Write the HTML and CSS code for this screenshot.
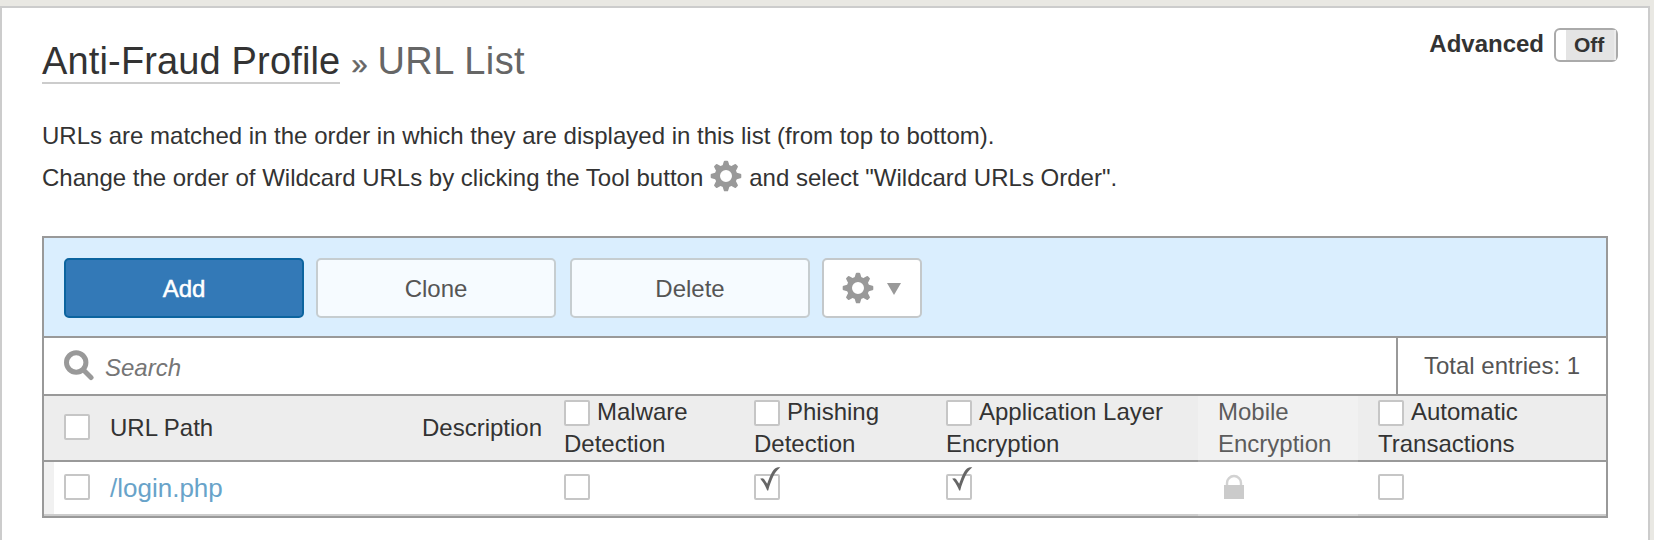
FILE: index.html
```html
<!DOCTYPE html>
<html lang="en">
<head>
<meta charset="utf-8">
<title>Anti-Fraud Profile » URL List</title>
<link rel="stylesheet" href="styles.css">
</head>
<body>
<svg width="0" height="0" class="defs">
  <symbol id="gear" viewBox="-16 -16 32 32">
    <g fill="currentColor">
      <g id="teeth">
        <path id="tooth" d="M-2.2-14.400Q-2-15.300-1.200-15.300H1.200Q2-15.300 2.200-14.400L3.600-10h-7.200z"/>
        <use href="#tooth" transform="rotate(90)"/>
        <use href="#tooth" transform="rotate(180)"/>
        <use href="#tooth" transform="rotate(270)"/>
      </g>
      <use href="#teeth" transform="rotate(45)"/>
      <path fill-rule="evenodd" d="M0-11.2A11.2 11.2 0 1 1 0 11.2A11.2 11.2 0 1 1 0-11.2zM0-6A6 6 0 1 0 0 6A6 6 0 1 0 0-6z"/>
    </g>
  </symbol>
  <symbol id="check" viewBox="0 0 21 24">
    <path fill="#666" d="M0 11.800Q2.500 10.400 4 12L7.200 16.800C9.500 10.500 11.500 4.500 15 1.500C16.500 .2 18.500 .1 20.300 .2C16.500 3.500 14.500 6.500 13.200 9.500C11.500 13.500 9.500 18 8.200 23.400H7.200C6 20.500 4 16.200 1.400 13.200C1 12.600 .5 12.100 0 11.800z"/>
  </symbol>
</svg>
<main class="panel">
  <header class="top">
    <h1 class="title"><a class="crumb">Anti-Fraud Profile</a> <span class="sep">»</span> <span class="current">URL List</span></h1>
    <div class="advanced"><span class="adv-label">Advanced</span><span class="switch"><span class="switch-text">Off</span></span></div>
  </header>
  <div class="intro">
    <p class="line">URLs are matched in the order in which they are displayed in this list (from top to bottom).</p>
    <p class="line"><span>Change the order of Wildcard URLs by clicking the Tool button</span><svg class="gear-inline"><use href="#gear"/></svg><span>and select "Wildcard URLs Order".</span></p>
  </div>
  <section class="grid">
    <div class="toolbar">
      <button class="btn primary">Add</button>
      <button class="btn">Clone</button>
      <button class="btn delete">Delete</button>
      <button class="btn tool"><svg class="gear-btn"><use href="#gear"/></svg><span class="caret"></span></button>
    </div>
    <div class="search">
      <div class="search-field"><svg class="lens" viewBox="0 0 30 31"><circle cx="12.200" cy="12.500" r="9.700"/><path d="M19.500 20l7.500 7.500"/></svg><span class="placeholder">Search</span></div>
      <div class="total">Total entries: 1</div>
    </div>
    <div class="row head">
      <div class="cell pick"><span class="box"></span></div>
      <div class="cell path">URL Path</div>
      <div class="cell desc">Description</div>
      <div class="cell two"><div><span class="box"></span>Malware</div><div>Detection</div></div>
      <div class="cell two"><div><span class="box"></span>Phishing</div><div>Detection</div></div>
      <div class="cell two"><div><span class="box"></span>Application Layer</div><div>Encryption</div></div>
      <div class="cell two mobile"><div>Mobile</div><div>Encryption</div></div>
      <div class="cell two auto"><div><span class="box"></span>Automatic</div><div>Transactions</div></div>
    </div>
    <div class="row item">
      <div class="cell pick"><span class="box"></span></div>
      <div class="cell path"><a class="link">/login.php</a></div>
      <div class="cell desc"></div>
      <div class="cell"><span class="box"></span></div>
      <div class="cell"><span class="box"><svg class="check"><use href="#check"/></svg></span></div>
      <div class="cell"><span class="box"><svg class="check"><use href="#check"/></svg></span></div>
      <div class="cell mobile"><svg class="lock" viewBox="0 0 22 26"><path d="M4 12V9a7 7 0 0 1 14 0v3" fill="none" stroke="#d2d2d2" stroke-width="2.400"/><path d="M1 11h20v14H1z" fill="#cbcbcb"/></svg></div>
      <div class="cell auto"><span class="box"></span></div>
    </div>
  </section>
</main>
</body>
</html>
```

FILE: styles.css
```css
* { box-sizing: border-box; }
body {
  margin: 0;
  height: 540px;
  overflow: hidden;
  padding: 6px 4px 0 0;
  background: #e9e8e3;
  font: 24px/32px "Liberation Sans", Arial, sans-serif;
  color: #333;
}
.defs { position: absolute; }
.panel {
  height: 560px;
  padding: 0 40px;
  border: 2px solid #ccc;
  background: #fff;
}
.top {
  display: flex;
  justify-content: space-between;
  height: 107px;
  padding-top: 20px;
}
.title {
  display: flex;
  align-items: flex-start;
  margin: 11px 0 0;
  font-size: 38px;
  font-weight: 400;
  line-height: 44px;
  white-space: nowrap;
}
.crumb { height: 45px; border-bottom: 2px solid #ccc; letter-spacing: .15px; }
.sep { margin: 3px 11px 0; color: #666; font-size: 29px; line-height: 44px; -webkit-text-stroke: .5px #666; }
.current { margin-left: -1px; color: #666; letter-spacing: .4px; }
.advanced { display: flex; gap: 10px; margin-right: -10px; font-weight: 700; }
.adv-label { line-height: 32px; }
.switch {
  display: flex;
  width: 64px;
  height: 34px;
  padding-left: 10px;
  border: 2px solid #aaa;
  border-radius: 6px;
  background: #fff;
}
.switch-text {
  flex: 1;
  padding-left: 8px;
  background: #e4e4e4;
  border-right: 2px solid #ececec;
  font-size: 21px;
  line-height: 30px;
}
.intro { height: 121px; }
.line { display: flex; margin: 0; line-height: 42px; white-space: nowrap; }
.gear-inline { width: 32px; height: 32px; margin: 3px 7px 0; color: #999; }
.grid { width: 1566px; border: 2px solid #999; }
.toolbar {
  display: flex;
  height: 100px;
  padding: 20px;
  background: #daeefe;
  border-bottom: 2px solid #999;
}
.btn {
  width: 240px;
  height: 60px;
  margin: 0 12px 0 0;
  padding: 2px 0 0;
  border: 2px solid #c6cdd0;
  border-radius: 5px;
  background: #f6fbff;
  color: #555;
  font: inherit;
}
.primary { background: #3379b7; border-color: #0c649f; color: #fff; -webkit-text-stroke: .5px #fff; }
.delete { margin-left: 2px; }
.tool { display: flex; align-items: center; width: 100px; padding: 0 0 0 18px; background: #fff; border-color: #c4c8ca; }
.gear-btn { width: 32px; height: 32px; color: #999; }
.caret { margin: 1px 0 0 13px; border: 7px solid transparent; border-top: 12px solid #999; border-bottom: 0; }
.search { display: flex; height: 58px; border-bottom: 2px solid #999; }
.search-field { display: flex; flex: 1; padding: 12px 0 0 20px; }
.lens { width: 30px; height: 31px; fill: none; stroke: #999; stroke-width: 5; stroke-linecap: round; }
.placeholder { margin: 2px 0 0 11px; font-style: italic; color: #757575; }
.total { width: 210px; padding: 12px 0 0 26px; border-left: 2px solid #999; color: #555; white-space: nowrap; }
.row { display: grid; grid-template-columns: 64px 296px 116px 190px 192px 296px 160px 248px; }
.cell { padding-left: 44px; border-bottom: 2px solid #999; white-space: nowrap; }
.head { height: 66px; background: #ededed; }
.head .pick { padding: 18px 0 0 20px; }
.head .path, .head .desc { line-height: 64px; height: 66px; }
.two > div { display: flex; height: 32px; }
.box { display: block; flex: none; width: 26px; height: 26px; border: 2px solid #c6c6c6; border-radius: 2px; background: #fff; position: relative; }
.two .box { margin: 4px 7px 0 0; }
.item { height: 54px; }
.item .cell { height: 54px; padding-top: 12px; border-bottom-color: #ccc; }
.check { position: absolute; left: 4px; top: -9px; width: 21px; height: 24px; }
.link { display: block; color: #68a3c9; font-size: 26px; line-height: 28px; }
.row .mobile { padding-left: 20px; }
.head .mobile { background: #f1f1f1; border-bottom-color: #aaa; color: #5c5c5c; }
.item .mobile { border-bottom-color: #d8d8d8; padding-left: 25px; }
.row .auto { padding-left: 20px; }
.lock { display: block; width: 22px; height: 26px; }
.item .pick { padding-left: 10px; box-shadow: inset 10px 0 #f1f1f1; padding-left: 20px; }
.row .path { padding-left: 2px; }
.row .desc { padding-left: 18px; }
```
